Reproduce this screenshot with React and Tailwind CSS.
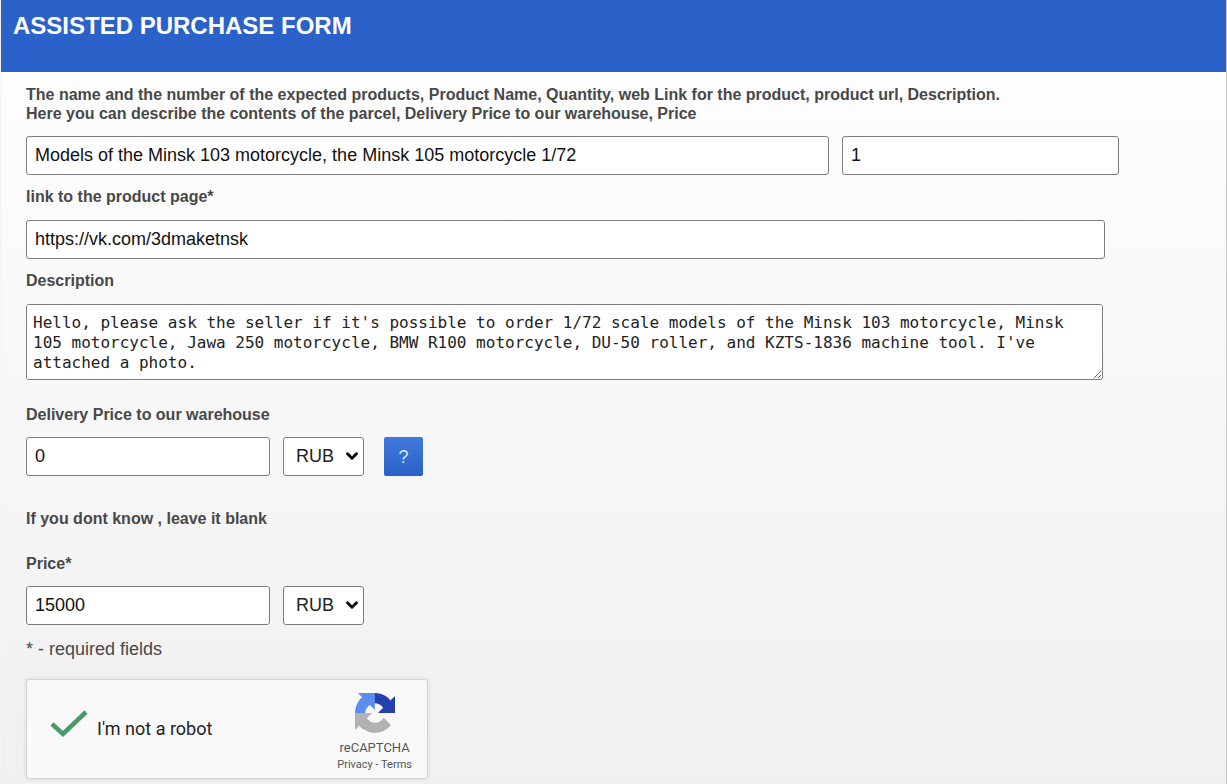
import { useState } from 'react';
import { ChevronDown } from 'lucide-react';

const inputClass =
    'block h-[39px] min-w-0 rounded-[3px] border border-[#7d7d7d] bg-white px-2 text-lg text-[#111]';

const labelClass = 'block text-base leading-[19px] font-bold text-[#484848]';

function CurrencySelect({ id, label }) {
    return (
        <div className="relative">
            <select
                id={id}
                aria-label={label}
                defaultValue="RUB"
                className="block h-[39px] w-[81px] appearance-none rounded-[3px] border border-[#7d7d7d] bg-white pb-px pl-3 text-lg text-[#222]"
            >
                <option>RUB</option>
                <option>USD</option>
                <option>EUR</option>
            </select>
            <ChevronDown
                size={18}
                strokeWidth={4}
                className="pointer-events-none absolute top-[10px] right-[3px] text-[#111]"
            />
        </div>
    );
}

function RecaptchaLogo() {
    return (
        <svg viewBox="0 0 64 64" className="size-10" aria-hidden="true">
            <path
                fill="#2440ab"
                d="M64 31.955l-.033-1.37V4.687l-7.16 7.16C50.948 4.674 42.033.093 32.05.093c-10.4 0-19.622 4.96-25.458 12.64l11.736 11.86a15.55 15.55 0 0 1 4.754-5.334c2.05-1.6 4.952-2.906 8.968-2.906.485 0 .86.057 1.135.163 4.976.393 9.288 3.14 11.828 7.124l-8.307 8.307L64 31.953"
            />
            <path
                fill="#5a8ff0"
                d="M31.862.094l-1.37.033H4.594l7.16 7.16C4.58 13.147 0 22.06 0 32.046c0 10.4 4.96 19.622 12.64 25.458L24.5 45.768a15.55 15.55 0 0 1-5.334-4.754c-1.6-2.05-2.906-4.952-2.906-8.968 0-.485.057-.86.163-1.135.393-4.976 3.14-9.288 7.124-11.828l8.307 8.307L31.86.095"
            />
            <path
                fill="#b2b2b2"
                d="M.001 32.045l.033 1.37v25.898l7.16-7.16c5.86 7.173 14.774 11.754 24.76 11.754 10.4 0 19.622-4.96 25.458-12.64l-11.736-11.86a15.55 15.55 0 0 1-4.754 5.334c-2.05 1.6-4.952 2.906-8.968 2.906-.485 0-.86-.057-1.135-.163-4.976-.393-9.288-3.14-11.828-7.124l8.307-8.307c-10.522.04-22.4.066-27.295-.005"
            />
        </svg>
    );
}

function Recaptcha() {
    const [checked, setChecked] = useState(true);

    return (
        <div className="mt-5 flex h-[100px] w-[402px] items-center justify-between rounded-[3px] border border-[#d3d3d3] bg-[#f9f9f9] pr-[15px] pl-[22px] font-['Roboto',sans-serif] shadow-[0_0_4px_rgba(0,0,0,0.1)]">
            <label className="flex items-center gap-2 text-lg text-[#222]">
                <input
                    type="checkbox"
                    className="sr-only"
                    checked={checked}
                    onChange={(e) => setChecked(e.target.checked)}
                />
                <svg viewBox="0 0 40 40" className="size-10" aria-hidden="true">
                    {checked ? (
                        <path d="M3 15l11 10L37 3" fill="none" stroke="#4a9a66" strokeWidth="4.5" />
                    ) : (
                        <rect x="5" y="5" width="30" height="30" rx="2" fill="#fff" stroke="#c1c1c1" strokeWidth="2" />
                    )}
                </svg>
                I'm not a robot
            </label>
            <div className="flex flex-col items-center pt-2 text-[#555]">
                <RecaptchaLogo />
                <span className="mt-[6px] text-[13px] leading-[18px]">reCAPTCHA</span>
                <span className="text-[11px] leading-4">
                    <a href="#privacy">Privacy</a> - <a href="#terms">Terms</a>
                </span>
            </div>
        </div>
    );
}

export default function App() {
    return (
        <main className="min-h-screen border-x border-l-[#f4f4f4] border-r-[#c4c4c4] bg-linear-to-b from-white to-[#f0f0f0] font-['Liberation_Sans',Arial,sans-serif]">
            <header className="h-[72px] bg-[#2a62c9] px-3 pt-3">
                <h1 className="text-2xl leading-7 font-bold text-white">ASSISTED PURCHASE FORM</h1>
            </header>

            <form className="pt-[13px] pr-[107px] pb-[5px] pl-[25px]" onSubmit={(e) => e.preventDefault()}>
                <label htmlFor="product" className={labelClass}>
                    The name and the number of the expected products, Product Name, Quantity, web Link for the
                    product, product url, Description.
                    <br />
                    Here you can describe the contents of the parcel, Delivery Price to our warehouse, Price
                </label>
                <div className="mt-[13px] grid grid-cols-[29fr_10fr] gap-[13px]">
                    <input
                        id="product"
                        type="text"
                        defaultValue="Models of the Minsk 103 motorcycle, the Minsk 105 motorcycle 1/72"
                        className={inputClass}
                    />
                    <input type="text" aria-label="Quantity" defaultValue="1" className={inputClass} />
                </div>

                <label htmlFor="link" className={`${labelClass} mt-3`}>
                    link to the product page*
                </label>
                <div className="mt-[14px] flex pr-[14px]">
                    <input
                        id="link"
                        type="text"
                        defaultValue="https://vk.com/3dmaketnsk"
                        className={`${inputClass} flex-1`}
                    />
                </div>

                <label htmlFor="description" className={`${labelClass} mt-3`}>
                    Description
                </label>
                <div className="mt-[14px] flex pr-4">
                    <textarea
                        id="description"
                        rows={3}
                        className="block h-[76px] flex-1 rounded-[3px] border border-[#7d7d7d] bg-white px-[6px] py-2 font-['DejaVu_Sans_Mono',monospace] text-base leading-5 text-[#222]"
                        defaultValue="Hello, please ask the seller if it's possible to order 1/72 scale models of the Minsk 103 motorcycle, Minsk 105 motorcycle, Jawa 250 motorcycle, BMW R100 motorcycle, DU-50 roller, and KZTS-1836 machine tool. I've attached a photo."
                    />
                </div>

                <label htmlFor="delivery" className={`${labelClass} mt-[25px]`}>
                    Delivery Price to our warehouse
                </label>
                <div className="mt-[13px] flex">
                    <input id="delivery" type="text" defaultValue="0" className={`${inputClass} mr-[13px] w-[244px]`} />
                    <CurrencySelect id="delivery-currency" label="Delivery currency" />
                    <button
                        type="button"
                        className="ml-5 h-[39px] w-[39px] rounded-[2px] bg-linear-to-b from-[#417adb] to-[#2961c8] text-lg text-[#d5e6ff]"
                    >
                        ?
                    </button>
                </div>

                <p className={`${labelClass} mt-[33px]`}>If you dont know , leave it blank</p>

                <label htmlFor="price" className={`${labelClass} mt-[26px]`}>
                    Price*
                </label>
                <div className="mt-[13px] flex">
                    <input id="price" type="text" defaultValue="15000" className={`${inputClass} mr-[13px] w-[244px]`} />
                    <CurrencySelect id="price-currency" label="Price currency" />
                </div>

                <p className="mt-[14px] text-lg leading-5 text-[#484848]">* - required fields</p>

                <Recaptcha />
            </form>
        </main>
    );
}
